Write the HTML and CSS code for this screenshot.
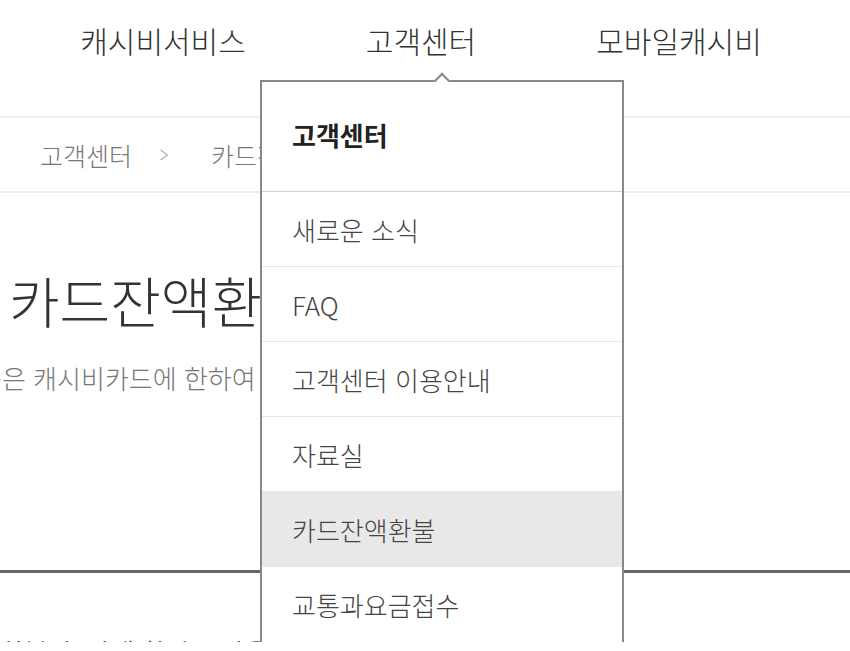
FILE: index.html
```html
<!DOCTYPE html>
<html lang="ko">
<head>
<meta charset="utf-8">
<title>카드잔액환불</title>
<link rel="stylesheet" href="styles.css">
</head>
<body>
<div class="page">
  <header class="gnb">
    <a class="gnb-item">캐시비서비스</a>
    <a class="gnb-item">고객센터</a>
    <a class="gnb-item">모바일캐시비</a>
  </header>
  <nav class="crumbs">
    <span class="crumb">고객센터</span>
    <svg class="sep" width="10" height="12" viewBox="0 0 10 12"><polyline points="1.5,1 8.5,6 1.5,11" fill="none" stroke="#b0b0b0" stroke-width="1.2"/></svg>
    <span class="crumb">카드잔액환불</span>
  </nav>
  <section class="intro">
    <h1 class="title">카드잔액환불</h1>
    <p class="desc">용은 캐시비카드에 한하여 가능합니다.</p>
  </section>
  <div class="table-top"></div>
  <p class="notice">환불 후 잔액 확인은 다음 날부터 가능하며 처리 안내는</p>
  <div class="dropdown">
    <span class="caret"></span>
    <div class="dd-head">고객센터</div>
    <ul class="dd-list">
      <li class="dd-item">새로운 소식</li>
      <li class="dd-item">FAQ</li>
      <li class="dd-item">고객센터 이용안내</li>
      <li class="dd-item">자료실</li>
      <li class="dd-item active">카드잔액환불</li>
      <li class="dd-item">교통과요금접수</li>
    </ul>
  </div>
</div>
</body>
</html>
```
FILE: styles.css
```css
* { box-sizing: border-box; }
html, body { margin: 0; padding: 0; background: #fff; }
body {
  font-family: "Noto Sans CJK KR", "Noto Sans", sans-serif;
  overflow: hidden;
}
.page {
  position: relative;
  width: 850px;
  height: 642px;
  overflow: hidden;
}
.gnb {
  display: flex;
  height: 118px;
  padding-left: 34px;
  border-bottom: 2px solid #eeeeee;
}
.gnb-item {
  width: 258px;
  text-align: center;
  font-size: 30px;
  line-height: 30px;
  padding-top: 25px;
  color: #333;
  font-weight: 300;
}
.crumbs {
  display: flex;
  align-items: center;
  height: 75px;
  padding: 0 0 0 40px;
  border-bottom: 2px solid #eeeeee;
  font-size: 25px;
  color: #777;
  font-weight: 300;
}
.sep { margin: 0 42px 0 27px; }
.intro {
  height: 377px;
  padding-top: 79px;
}
.title {
  margin: 0 0 0 9px;
  font-size: 55px;
  line-height: 55px;
  font-weight: 300;
  color: #333;
}
.desc {
  margin: 38px 0 0 -22px;
  font-size: 26px;
  line-height: 26px;
  color: #777;
  font-weight: 300;
  white-space: nowrap;
}
.table-top {
  height: 3px;
  background: #666;
}
.notice {
  margin: 66px 0 0 0;
  font-size: 26px;
  line-height: 26px;
  color: #555;
  white-space: nowrap;
}
.dropdown {
  position: absolute;
  left: 260px;
  top: 80px;
  width: 364px;
  height: 600px;
  background: #fff;
  border: 2px solid #888;
  border-bottom: 0;
}
.caret {
  position: absolute;
  left: 174px;
  top: -7px;
  width: 12px;
  height: 12px;
  background: #fff;
  border-top: 2px solid #888;
  border-left: 2px solid #888;
  transform: rotate(45deg);
}
.dd-head {
  height: 110px;
  padding: 40px 0 0 30px;
  font-size: 26px;
  line-height: 26px;
  font-weight: 700;
  color: #222;
  border-bottom: 1px solid #d0d0d0;
}
.dd-list { list-style: none; margin: 0; padding: 0; }
.dd-item {
  height: 75px;
  display: flex;
  align-items: center;
  padding-left: 30px;
  font-size: 26px;
  color: #444;
  font-weight: 300;
  border-bottom: 1px solid #e6e6e6;
}
.dd-item:last-child { border-bottom: 0; }
.dd-item.active { background: #e8e8e8; border-bottom-color: #e8e8e8; }
```
